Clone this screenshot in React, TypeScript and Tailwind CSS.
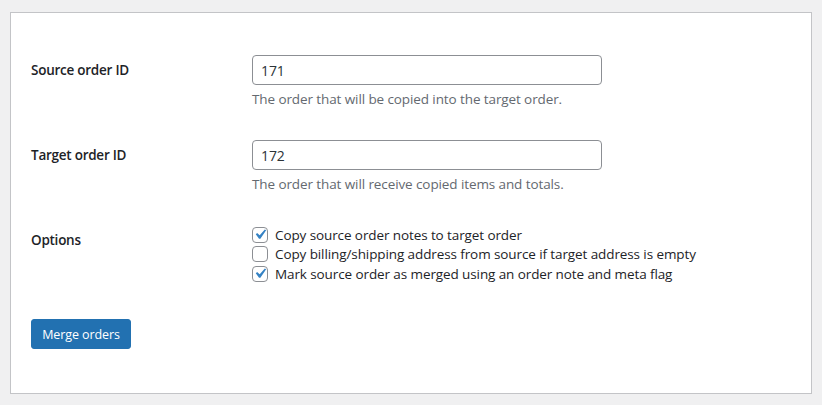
import { useState } from "react"

const font = { fontFamily: '"Open Sans", "Noto Sans", sans-serif' }

function Check({ checked, onClick }: { checked: boolean; onClick: () => void }) {
  return (
    <span onClick={onClick} className="inline-flex items-center justify-center w-4 h-4 shrink-0 border border-[#8c8f94] rounded-[4px] bg-white cursor-pointer">
      {checked && (
        <svg viewBox="0 0 20 20" className="w-[21px] h-[21px] -m-[3px]">
          <path d="M14.83 4.89l1.34.94-5.81 8.38H9.02L5.78 9.67l1.34-1.25 2.57 2.4z" fill="#3582c4" />
        </svg>
      )}
    </span>
  )
}

export default function App() {
  const [source, setSource] = useState('171')
  const [target, setTarget] = useState('172')
  const [opts, setOpts] = useState([true, false, true])
  const labels = [
    'Copy source order notes to target order',
    'Copy billing/shipping address from source if target address is empty',
    'Mark source order as merged using an order note and meta flag',
  ]
  const toggle = (i: number) => setOpts(o => o.map((v, j) => (j === i ? !v : v)))

  return (
    <div className="min-h-[405px] bg-[#f0f0f1] pt-3 pl-[10px] pr-[10px]" style={font}>
      <div className="w-[802px] h-[382px] bg-white border border-[#c3c4c7] px-5 pt-[27px] text-[13.5px] tracking-[-0.1px] text-[#3c434a]">
        <div className="flex py-[15px]">
          <div className="w-[221px] pt-[6px] font-semibold text-[#1d2327] leading-[1.35] tracking-[-0.25px]">Source order ID</div>
          <div>
            <input value={source} onChange={e => setSource(e.target.value)} className="w-[350px] h-[30px] px-2 border border-[#8c8f94] rounded-[4px] text-[14px] text-[#2c3338] outline-none" />
            <p className="mt-1 leading-[21px] text-[#646970]">The order that will be copied into the target order.</p>
          </div>
        </div>
        <div className="flex py-[15px]">
          <div className="w-[221px] pt-[6px] font-semibold text-[#1d2327] leading-[1.35] tracking-[-0.25px]">Target order ID</div>
          <div>
            <input value={target} onChange={e => setTarget(e.target.value)} className="w-[350px] h-[30px] px-2 border border-[#8c8f94] rounded-[4px] text-[14px] text-[#2c3338] outline-none" />
            <p className="mt-1 leading-[21px] text-[#646970]">The order that will receive copied items and totals.</p>
          </div>
        </div>
        <div className="flex py-[15px]">
          <div className="w-[221px] pt-[6px] font-semibold text-[#1d2327] leading-[1.35] tracking-[-0.25px]">Options</div>
          <div className="flex flex-col">
            {labels.map((l, i) => (
              <label key={i} className="flex items-center gap-[7px] h-[19.5px] text-[#1d2327]">
                <Check checked={opts[i]} onClick={() => toggle(i)} />
                <span>{l}</span>
              </label>
            ))}
          </div>
        </div>
        <div className="pt-5">
          <button className="h-[30px] w-[100px] bg-[#2271b1] rounded-[3px] text-white text-[12.5px] tracking-[-0.1px] leading-[29px] border border-[#2271b1]">Merge orders</button>
        </div>
      </div>
    </div>
  )
}
